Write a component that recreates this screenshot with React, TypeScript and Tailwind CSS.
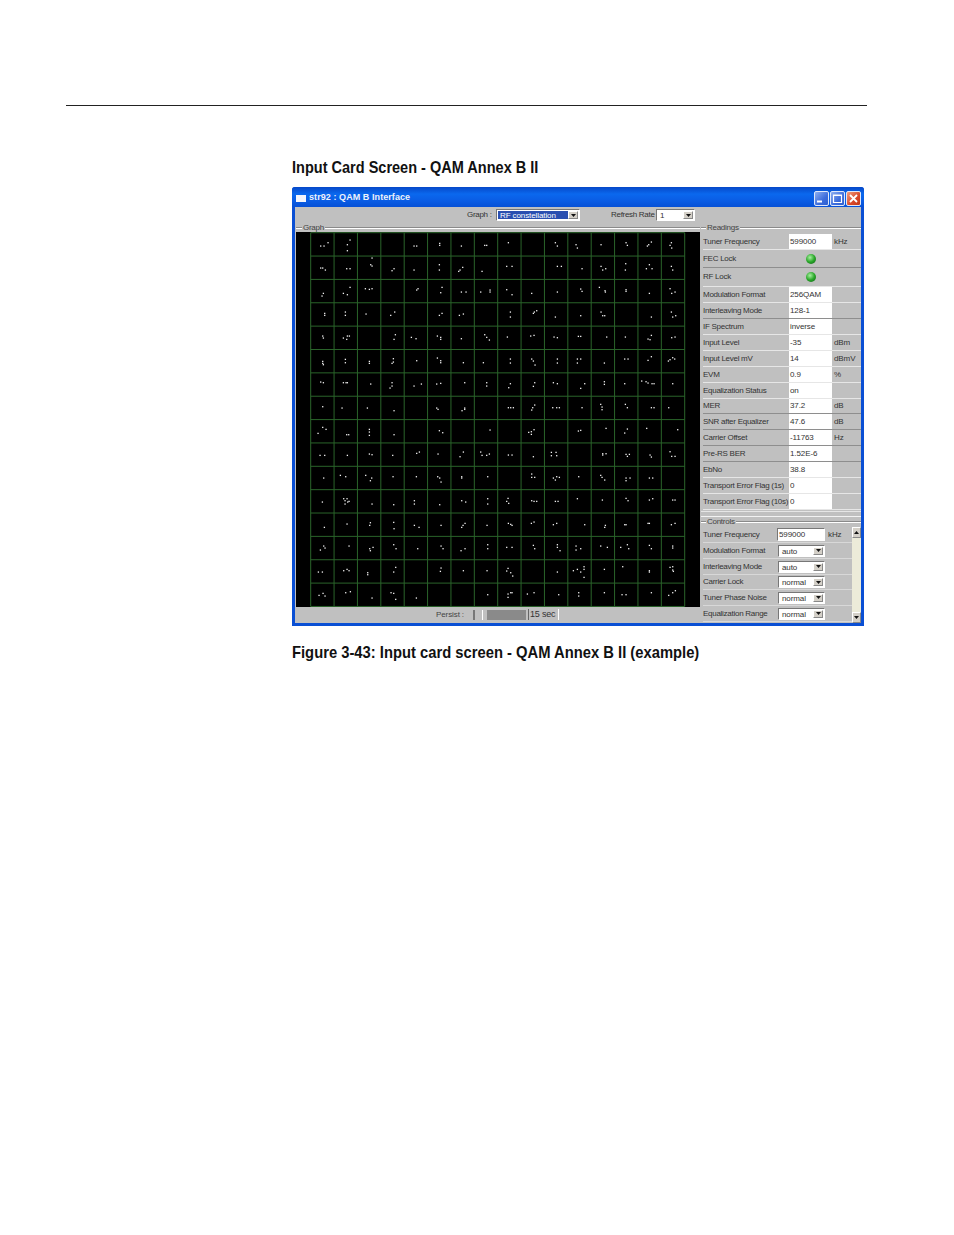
const ui = { fontFamily: '"Liberation Sans", Arial, sans-serif' };

// Constellation dots, read off the screenshot in zoomed crops: crop origin + "x,y" at 3x.
const dotGroups: { ox: number; oy: number; pts: string }[] = [
  { ox: 290, oy: 180, pts: "92,198 102,198 114,188 180,180 172,194 172,212 372,198 380,198 449,190 449,196 514,198 584,196 590,196 92,264 98,264 106,270 170,266 180,266 246,234 242,254 246,258 312,266 306,272 372,270 448,254 448,270 518,262 510,270 506,274 576,274 100,340 96,348 180,322 160,340 172,344 226,326 238,328 246,326 384,326 380,330 456,322 452,338 514,336 528,336 572,336 600,330 600,336 104,400 104,406 166,396 166,406 228,402 314,396 302,406 448,406 456,400 508,406 520,402" },
  { ox: 490, oy: 228, pts: "55,44 196,44 202,54 258,50 262,60 333,50 408,44 412,52 484,42 476,50 472,54 544,44 540,52 545,60 50,115 66,115 202,115 214,115 276,122 333,115 338,126 347,122 407,107 406,126 478,110 469,122 486,122 544,115 548,126 50,185 66,200 125,196 202,192 272,183 276,190 328,178 345,188 346,192 408,185 408,190 478,196 540,182 545,196 555,192 61,252 61,267 133,252 140,248 130,256 196,267 272,263 333,252 338,263 344,263 484,267 544,252 548,267 557,263" },
  { ox: 290, oy: 330, pts: "98,18 100,24 160,24 172,18 178,18 170,28 316,14 312,28 364,22 378,26 442,18 452,22 452,28 514,26 584,14 590,22 598,30 98,94 100,104 98,100 166,88 166,98 238,94 238,100 310,86 306,100 310,96 380,92 442,84 452,92 452,98 520,98 580,98 92,156 100,158 160,158 168,158 172,158 242,162 306,158 306,168 300,174 372,168 394,162 440,162 452,160 524,158 590,158 590,168 98,230 156,234 232,234 312,242 440,234 444,238 524,234 516,242 524,238 84,310 98,292 108,298 170,314 176,314 238,298 238,306 238,316 312,314 448,302 458,308 600,300 90,376 104,376 172,376 238,372 246,374 308,376 380,370 388,366 444,372 510,380 520,366 572,366 576,376 590,376 598,372" },
  { ox: 490, oy: 335, pts: "52,6 122,3 132,1 192,6 202,8 265,4 272,4 350,6 406,6 484,1 474,12 480,14 545,8 555,6 61,72 61,84 125,72 130,78 135,90 202,72 202,84 262,72 272,72 262,84 343,84 404,72 414,72 484,65 474,76 548,68 540,74 535,78 554,72 61,146 56,158 134,143 130,154 190,143 202,146 284,146 272,160 343,140 343,148 404,146 455,138 468,140 474,144 486,146 492,146 548,146 55,218 62,218 70,218 134,210 128,218 125,225 188,218 200,218 208,218 276,218 332,208 336,216 336,224 406,208 412,218 484,218 492,218 536,218 132,284 124,290 116,292 124,298 265,288 272,286 348,280 412,282 404,294 470,280 563,284 55,360 66,360 130,365 184,352 198,352 184,362 200,362 338,356 338,360 348,356 408,358 412,364 418,358 480,360 484,366 540,350 545,364 555,364" },
  { ox: 295, oy: 460, pts: "86,54 136,46 152,50 212,46 230,54 226,62 294,50 364,50 428,50 434,54 438,66 500,50 500,54 578,50 82,126 146,116 156,116 150,122 158,126 150,132 162,124 231,132 296,134 358,122 358,132 434,134 500,122 512,126 578,116 578,132 88,202 156,192 226,188 224,196 296,187 297,206 358,196 372,202 438,196 510,190 504,196 500,202 576,196 76,270 86,258 90,264 162,258 224,266 234,262 226,272 296,254 303,266 368,266 438,258 444,266 510,266 498,272 578,254 578,266 70,336 82,336 146,332 156,328 162,332 218,338 218,344 302,322 296,336 438,324 436,334 505,332 576,332 72,406 84,400 90,408 152,398 166,395 231,414 288,398 296,400 302,418 364,414 578,404" },
  { ox: 490, oy: 460, pts: "125,42 125,52 134,52 190,54 200,50 196,60 208,52 266,50 332,46 336,52 344,60 408,54 408,62 420,54 478,54 488,54 54,115 50,124 56,130 125,122 132,124 140,124 196,124 204,124 262,116 337,120 408,115 414,122 478,120 488,116 548,120 555,120 55,190 62,193 66,196 124,190 132,186 190,194 200,190 284,194 346,196 344,202 404,194 408,194 474,190 478,190 544,194 555,190 50,262 66,262 130,256 134,266 202,254 202,262 210,272 258,258 258,270 272,266 332,258 352,262 412,254 416,266 392,262 478,256 484,266 548,258 548,264 54,325 50,333 62,338 68,348 202,336 250,332 262,328 272,336 282,320 282,328 282,352 343,328 398,320 478,332 478,336 540,322 548,320 548,330 550,334 62,398 54,402 54,412 66,398 112,402 132,398 206,404 266,398 266,408 343,398 396,404 408,404 484,398 556,392 548,398 536,406" },
];

const dots = dotGroups.flatMap((g) =>
  g.pts.split(" ").map((p) => {
    const [x, y] = p.split(",").map(Number);
    return { x: g.ox + x / 3 - 296, y: g.oy + y / 3 - 232 };
  }),
);

const gridSteps = Array.from({ length: 17 }, (_, i) => i);

interface Reading {
  label: string;
  value?: string;
  unit?: string;
  led?: boolean;
  dark?: boolean;
  rowClass?: string;
}

const readings: Reading[] = [
  { label: "Tuner Frequency", value: "599000", unit: "kHz" },
  { label: "FEC Lock", led: true, dark: true, rowClass: "h-[18px]" },
  { label: "RF Lock", led: true, rowClass: "h-[19px]" },
  { label: "Modulation Format", value: "256QAM" },
  { label: "Interleaving Mode", value: "128-1", dark: true },
  { label: "IF Spectrum", value: "inverse" },
  { label: "Input Level", value: "-35", unit: "dBm" },
  { label: "Input Level mV", value: "14", unit: "dBmV" },
  { label: "EVM", value: "0.9", unit: "%" },
  { label: "Equalization Status", value: "on" },
  { label: "MER", value: "37.2", unit: "dB", dark: true, rowClass: "h-[15px]" },
  { label: "SNR after Equalizer", value: "47.6", unit: "dB", dark: true },
  { label: "Carrier Offset", value: "-11763", unit: "Hz", dark: true },
  { label: "Pre-RS BER", value: "1.52E-6", dark: true },
  { label: "EbNo", value: "38.8" },
  { label: "Transport Error Flag (1s)", value: "0" },
  { label: "Transport Error Flag (10s)", value: "0" },
];

const controls = [
  { label: "Modulation Format", value: "auto" },
  { label: "Interleaving Mode", value: "auto" },
  { label: "Carrier Lock", value: "normal" },
  { label: "Tuner Phase Noise", value: "normal" },
  { label: "Equalization Range", value: "normal" },
];

function Arrow({ up = false }: { up?: boolean }) {
  return (
    <svg width="5" height="3" viewBox="0 0 5 3" className="block">
      <polygon points={up ? "2.5,0 5,3 0,3" : "0,0 5,0 2.5,3"} fill="#111" />
    </svg>
  );
}

function ArrowButton({ up = false, className = "" }: { up?: boolean; className?: string }) {
  return (
    <div className={`flex items-center justify-center border border-t-white border-l-white border-r-[#888] border-b-[#888] bg-[#d4d0c8] ${className}`}>
      <Arrow up={up} />
    </div>
  );
}

function Combo({ value, selected = false, className = "" }: { value: string; selected?: boolean; className?: string }) {
  return (
    <div className={`flex h-[12px] items-stretch border border-t-[#777] border-l-[#777] border-r-white border-b-white bg-white p-px ${className}`}>
      <div className={`min-w-0 flex-1 truncate pl-[2px] text-[8px] leading-[9px] tracking-[-0.1px] ${selected ? "bg-[#2a4fb0] text-white" : "text-[#333]"}`}>{value}</div>
      <ArrowButton className="w-[10px] shrink-0" />
    </div>
  );
}

function GroupLegend({ title, inset = 6 }: { title: string; inset?: number }) {
  return (
    <div className="flex h-[9px] items-center">
      <div className="h-[2px] border-t border-b border-t-[#8a8a8a] border-b-white" style={{ width: inset }} />
      <span className="px-[1px] text-[8px] leading-[9px] tracking-[-0.27px] text-[#444]">{title}</span>
      <div className="h-[2px] flex-1 border-t border-b border-t-[#8a8a8a] border-b-white" />
    </div>
  );
}

function WindowButton({ kind }: { kind: "min" | "max" | "close" }) {
  const bg = kind === "close"
    ? "bg-[linear-gradient(135deg,#f0a080,#d8482a_60%,#c03818)]"
    : "bg-[linear-gradient(135deg,#8fb0f0,#3c6cdc_60%,#2f5fd0)]";
  return (
    <div className={`flex h-[15px] w-[15px] items-center justify-center rounded-[2px] border border-[#dfe8fa] ${bg}`}>
      <svg width="11" height="11" viewBox="0 0 11 11">
        {kind === "min" && <rect x="1" y="7.5" width="5" height="2" fill="#fff" />}
        {kind === "max" && <path d="M1.5 2h8v7.5h-8z M1.5 2.5h8" fill="none" stroke="#fff" strokeWidth="1.2" />}
        {kind === "close" && <path d="M2 2l7 7M9 2l-7 7" fill="none" stroke="#fff" strokeWidth="1.8" />}
      </svg>
    </div>
  );
}

function ConstellationPlot() {
  const x0 = 14.7;
  const y0 = 0.7;
  const dx = 23.375;
  const dy = 23.36;
  return (
    <svg width="404" height="375" viewBox="0 0 404 375" className="block bg-black">
      {gridSteps.map((i) => (
        <g key={i} stroke="#2a642a" strokeWidth="1">
          <line x1={x0 + dx * i} y1={y0} x2={x0 + dx * i} y2={y0 + dy * 16} />
          <line x1={x0} y1={y0 + dy * i} x2={x0 + dx * 16} y2={y0 + dy * i} />
        </g>
      ))}
      {dots.map((d, i) => (
        <rect key={i} x={d.x - 0.6} y={d.y - 0.6} width="1.3" height="1.3" fill="#f2f2f2" />
      ))}
    </svg>
  );
}

function InterfaceWindow() {
  return (
    <div className="ml-[292px] flex h-[439px] w-[572px] flex-col rounded-t-[3px] bg-[#0a4fd4] px-[3px] pb-[3px]">
      {/* title bar */}
      <div className="-mx-[3px] flex h-[20px] shrink-0 items-center rounded-t-[3px] bg-[linear-gradient(to_bottom,#0648c8,#0a68ee_35%,#0a5ce4_70%,#0650d6)] pl-[4px] pr-[3px] pt-[2px]">
        <div className="h-[7px] w-[10px] bg-[#f4f6fc]" />
        <span className="ml-[3px] text-[9px] font-bold tracking-[0.07px] text-[#eef2fb]">str92 : QAM B Interface</span>
        <div className="ml-auto flex gap-px">
          <WindowButton kind="min" />
          <WindowButton kind="max" />
          <WindowButton kind="close" />
        </div>
      </div>

      <div className="flex min-h-0 flex-1 flex-col bg-[#c0c0c0]">
        {/* toolbar */}
        <div className="flex h-[16px] shrink-0 items-center whitespace-nowrap text-[8px] tracking-[-0.3px] text-[#333]">
          <span className="ml-[172px] w-[29px]">Graph :</span>
          <Combo value="RF constellation" selected className="w-[84px]" />
          <span className="ml-[31px] w-[45px]">Refresh Rate</span>
          <Combo value="1" className="w-[39px]" />
        </div>

        <div className="flex min-h-0 flex-1">
          {/* graph column */}
          <div className="flex w-[405px] shrink-0 flex-col pl-px">
            <GroupLegend title="Graph" />
            <ConstellationPlot />
            <div className="flex flex-1 items-center pb-px text-[8px] tracking-[-0.1px] text-[#444]">
              <span className="ml-[140px] w-[37px]">Persist :</span>
              <div className="h-[10px] w-[2px] bg-[#777]" />
              <div className="ml-[7px] h-[10px] w-px bg-white" />
              <div className="ml-[4px] h-[10px] w-[39px] bg-[#8a8a8a]" />
              <div className="ml-[2px] h-[11px] w-[31px] border-l border-r border-l-[#666] border-r-white pl-px text-[9px] leading-[11px] tracking-[-0.2px] text-[#333]">15 sec</div>
            </div>
          </div>

          {/* right column */}
          <div className="flex min-w-0 flex-1 flex-col pl-[1px]">
            <GroupLegend title="Readings" inset={5} />
            <div className="flex flex-col pl-[2px] pt-[2px]">
              {readings.map((r) => (
                <div
                  key={r.label}
                  className={`flex items-stretch border-b ${r.dark ? "border-[#8e8e8e]" : "border-[#e6e6e6]"} ${r.rowClass ?? "h-[16px]"}`}
                >
                  <div className="flex w-[86px] shrink-0 items-center whitespace-nowrap text-[8px] tracking-[-0.27px] text-[#333]">{r.label}</div>
                  {r.led ? (
                    <div className="flex w-[43px] items-center justify-center">
                      <div className="h-[10px] w-[10px] rounded-full bg-[radial-gradient(circle_at_40%_35%,#a8f0a0,#2aa82a_50%,#0c5c14)]" />
                    </div>
                  ) : (
                    <div className="flex w-[43px] items-center bg-white pl-[1px] text-[8px] tracking-[-0.1px] text-[#333]">{r.value}</div>
                  )}
                  <div className="flex items-center pl-[2px] text-[8px] tracking-[-0.1px] text-[#333]">{r.unit}</div>
                </div>
              ))}
            </div>
            <div className="mt-px h-[6px] border-t border-b border-t-[#e6e6e6] border-b-[#f2f2f2]" />
            <GroupLegend title="Controls" inset={5} />
            <div className="mt-px flex min-h-0 flex-1">
              <div className="flex flex-1 flex-col pl-[2px]">
                <div className="flex h-[16px] items-center border-b border-[#d8d8d8]">
                  <span className="w-[74px] shrink-0 text-[8px] tracking-[-0.27px] text-[#333]">Tuner Frequency</span>
                  <div className="h-[13px] w-[48px] border border-t-[#777] border-l-[#777] border-r-white border-b-white bg-white pl-px text-[8px] leading-[11px] tracking-[-0.1px] text-[#333]">599000</div>
                  <span className="ml-[3px] text-[8px] tracking-[-0.1px] text-[#333]">kHz</span>
                </div>
                {controls.map((c, i) => (
                  <div key={c.label} className={`flex items-center border-b border-[#d8d8d8] ${i === 2 ? "h-[15px]" : "h-[16px]"}`}>
                    <span className="w-[75px] shrink-0 whitespace-nowrap text-[8px] tracking-[-0.27px] text-[#333]">{c.label}</span>
                    <Combo value={c.value} className="w-[47px]" />
                  </div>
                ))}
              </div>
              {/* scrollbar */}
              <div className="flex w-[9px] shrink-0 flex-col bg-[#ecebd9]">
                <ArrowButton up className="h-[11px]" />
                <div className="flex-1" />
                <ArrowButton className="h-[11px]" />
              </div>
            </div>
          </div>
        </div>
      </div>
    </div>
  );
}

export default function App() {
  return (
    <div className="min-h-[1235px] bg-white pt-[105px]" style={ui}>
      <div className="ml-[66px] h-px w-[801px] bg-[#222]" />
      <h2 className="ml-[292px] mt-[51px] h-[20px] w-[300px] origin-left scale-x-[.88] whitespace-nowrap text-[16.5px] font-bold leading-[20px] text-[#111]">
        Input Card Screen - QAM Annex B II
      </h2>
      <div className="mt-[10px]">
        <InterfaceWindow />
      </div>
      <p className="ml-[292px] mt-[16px] h-[20px] w-[500px] origin-left scale-x-[.895] whitespace-nowrap text-[16.5px] font-bold leading-[20px] text-[#111]">
        Figure 3-43: Input card screen - QAM Annex B II (example)
      </p>
    </div>
  );
}
